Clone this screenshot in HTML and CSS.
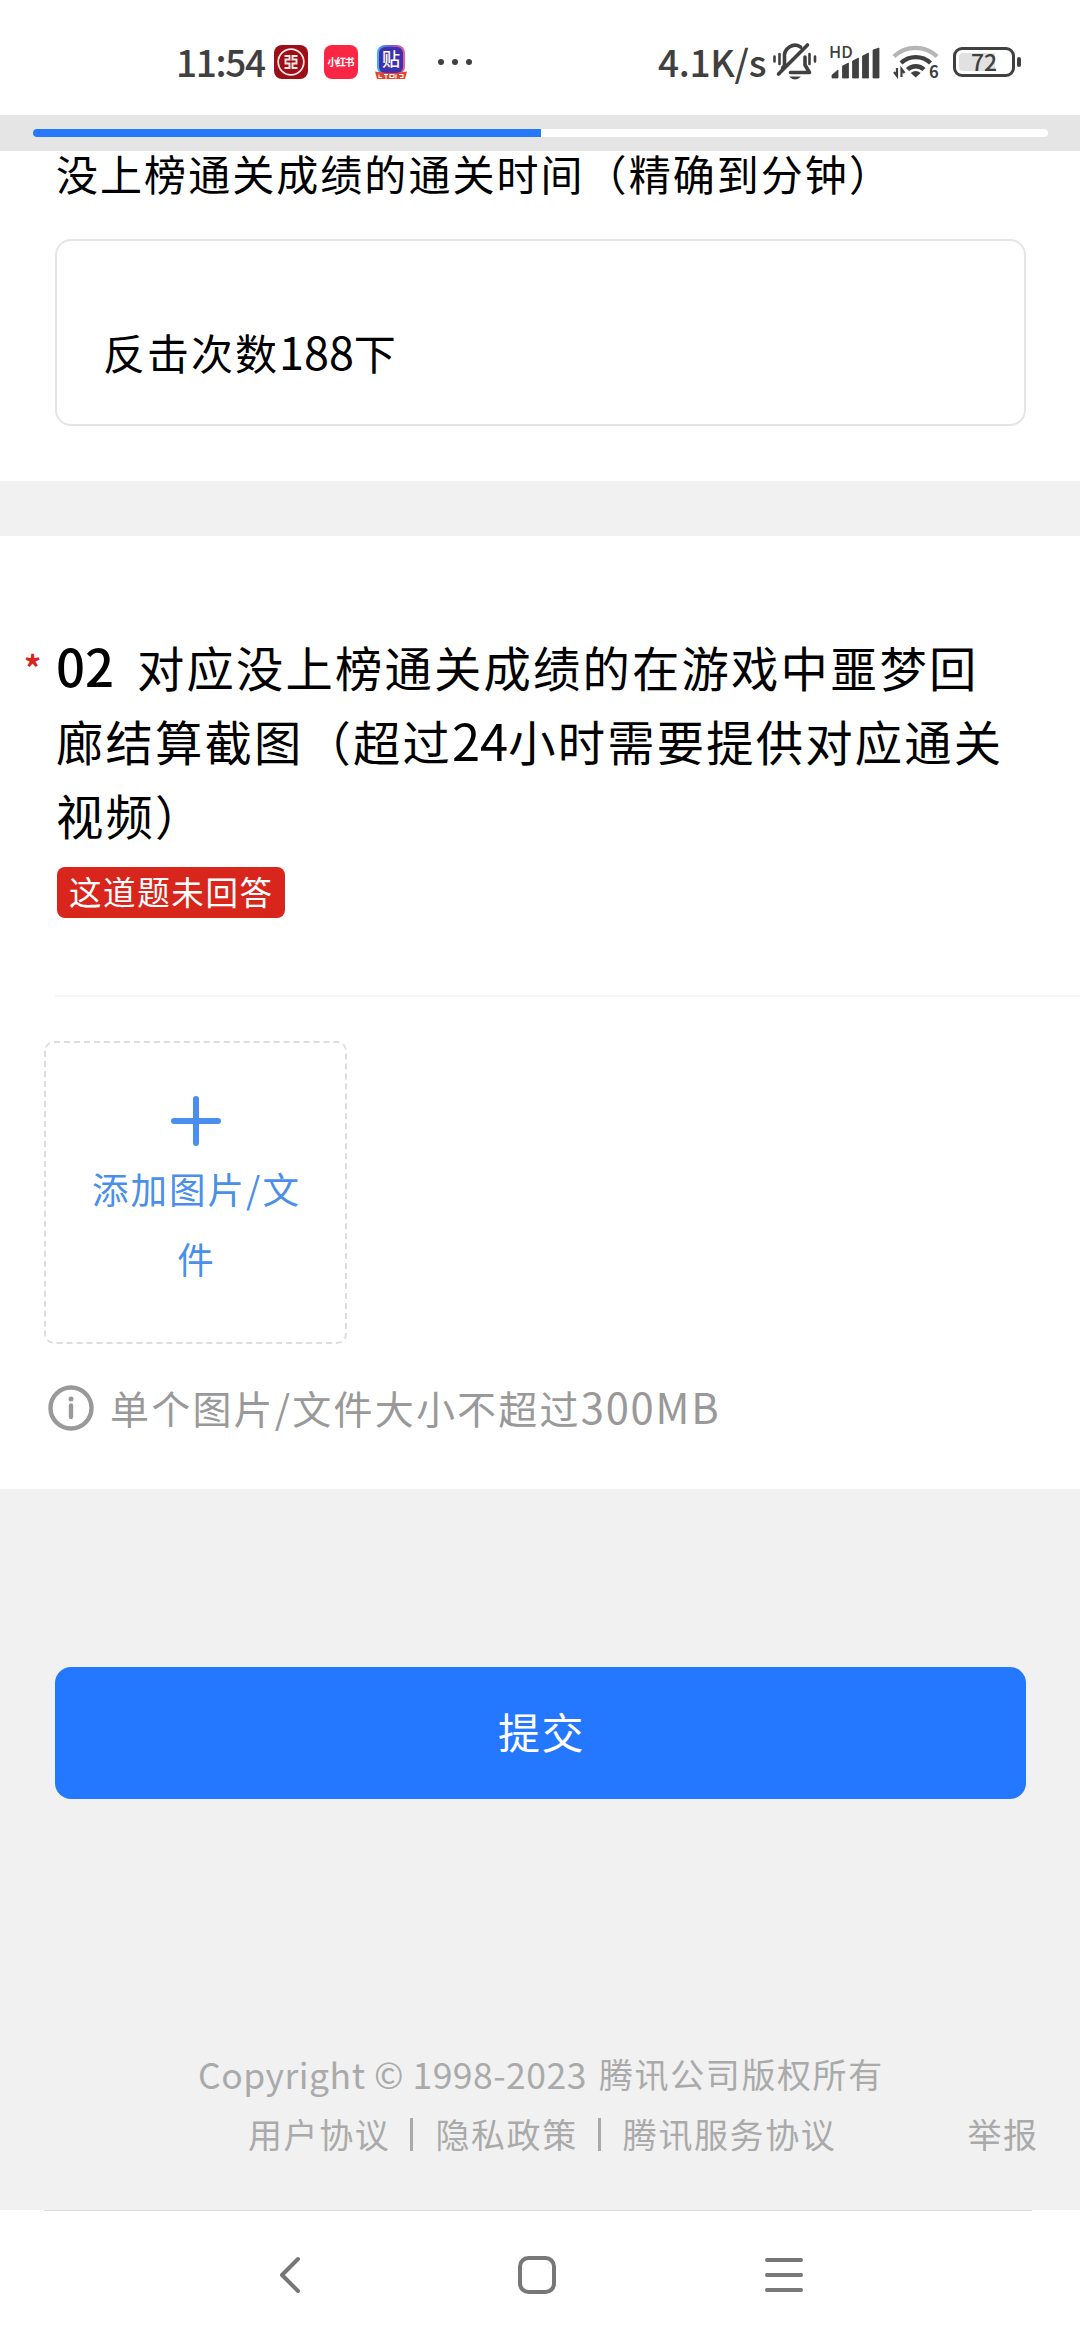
FILE: index.html
```html
<!DOCTYPE html>
<html lang="zh-CN">
<head>
<meta charset="utf-8">
<title>问卷</title>
<link rel="stylesheet" href="styles.css">
</head>
<body>
<header class="status">
  <span class="clock">11:54</span>
  <div class="apps">
    <svg width="34" height="34" viewBox="0 0 34 34"><rect width="34" height="34" rx="8" fill="#9d0e17"/><circle cx="17" cy="17" r="12.800" fill="none" stroke="#fbe9e9" stroke-width="1.700"/><path d="M10.500 11h5v3.500h-4v4h4v4.500h-5M23.500 11h-5v3.500h4v4h-4v4.500h5" fill="none" stroke="#fbe9e9" stroke-width="1.900"/></svg>
    <svg width="34" height="34" viewBox="0 0 34 34"><rect width="34" height="34" rx="8" fill="#fb2644"/><text class="logo-text" x="17" y="21" font-size="10" text-anchor="middle" textLength="27">小红书</text></svg>
    <svg width="34" height="34" viewBox="0 0 34 34"><defs><linearGradient id="g" x1="0" y1="0" x2="1" y2="0"><stop offset="0" stop-color="#3cb4f0"/><stop offset=".5" stop-color="#7a54d8"/><stop offset="1" stop-color="#f0608c"/></linearGradient></defs><rect x="3" width="28" height="30" rx="8" fill="url(#g)"/><rect x="5" y="2" width="24" height="26" rx="6" fill="#4030ad"/><text class="logo-text thin" x="17" y="20.500" font-size="18" text-anchor="middle">贴</text><path d="M1 26.500q16 3 32 0l-2 7.500h-28z" fill="#e2472b"/><path d="M5 29.500v3h3M10 29.500h4M12 29.500v4M16 29.500h4v3h-4zM22 29.500v4M25 29.500h4v3h-3" fill="none" stroke="#fff" stroke-width="1.100"/></svg>
  </div>
  <svg class="dots" width="36" height="8" viewBox="0 0 36 8"><circle cx="4" cy="4" r="3"/><circle cx="18" cy="4" r="3"/><circle cx="32" cy="4" r="3"/></svg>
  <span class="speed">4.1K/s</span>
  <svg class="bell" width="46" height="40" viewBox="0 0 46 40" fill="none" stroke="#404040" stroke-width="3.600" stroke-linecap="round" stroke-linejoin="round"><path d="M12.500 24v-8.500a10.500 11 0 0 1 16-10.500M33 15v8l4.500 7.500h-19M35.500 3L6.500 32M12 24l-1.500 2"/><path d="M7.500 12v10M37.500 12v10" stroke-width="2.600"/><path d="M2.500 14.500v5M43 14.500v5" stroke-width="2.600"/><path d="M17 34.500h12q-6 6-12 0z" fill="#404040" stroke="none"/></svg>
  <svg class="signal" width="52" height="48" viewBox="-2 -8 52 48"><text x="-1" y="13.500" font-size="16.500" font-weight="500" fill="#404040">HD</text><path d="M2 34v-3l6-5v8zM12.500 34v-12l6-3v15zM22.500 34v-17l6-3v20zM32.500 34v-22l6-3v25zM43 34V6l6-2v30z" fill="#404040" stroke="#404040" stroke-linejoin="round" stroke-width=".800"/></svg>
  <svg class="wifi" width="50" height="44" viewBox="0 -3 50 44" fill="none" stroke-width="4.400"><path d="M2 13.500a31 31 0 0 1 43 0" stroke="#b5b5b5"/><path d="M9 20a21.500 21.500 0 0 1 29.500 0M15.500 26.500a12 12 0 0 1 16.500 0" stroke="#404040"/><path d="M23.700 34.500l-5-4.500q5-4 10 0z" fill="#404040"/><path d="M2 29l3 4v-8M9.500 34v-8l3 4" stroke="#404040" stroke-width="2.200"/><text x="37" y="35" font-size="16.500" font-weight="700" fill="#404040">6</text></svg>
  <div class="battery"><span class="level">72</span></div>
</header>
<div class="progress"><div class="track"><div class="fill"></div></div></div>
<main>
  <section class="card first">
    <h2 class="subtitle">没上榜通关成绩的通关时间（精确到分钟）</h2>
    <div class="answer">反击次数<span class="num">188</span>下</div>
  </section>
  <section class="card second">
    <div class="question">
      <span class="star">*</span>
      <h2 class="title"><b>02</b>对应没上榜通关成绩的在游戏中噩梦回<br>廊结算截图（超过<span class="num">24</span>小时需要提供对应通关<br>视频）</h2>
    </div>
    <div class="error">这道题未回答</div>
    <hr class="rule">
    <div class="upload">
      <svg width="50" height="50" viewBox="0 0 50 50"><path d="M25 3v44M3 25h44" stroke="#4b8fee" stroke-width="6" stroke-linecap="round"/></svg>
      <p>添加图片/文<br>件</p>
    </div>
    <div class="hint">
      <svg width="46" height="46" viewBox="0 0 46 46"><circle cx="23" cy="23" r="20.500" fill="none" stroke="#999" stroke-width="4.400"/><circle cx="23" cy="14" r="2.500" fill="#999"/><path d="M23 20.500v11.500" stroke="#999" stroke-width="4.400" stroke-linecap="round"/></svg>
      <p>单个图片/文件大小不超过<span class="num size">300MB</span></p>
    </div>
  </section>
  <button class="submit">提交</button>
  <footer class="footer">
    <p class="copy"><span class="latin">Copyright © 1998-2023</span><span>腾讯公司版权所有</span></p>
    <div class="links"><span>用户协议</span><i></i><span>隐私政策</span><i></i><span>腾讯服务协议</span><span class="report">举报</span></div>
  </footer>
</main>
<nav class="nav">
  <svg width="38" height="40" viewBox="0 0 38 40"><path d="M27 4L11 20l16 16"/></svg>
  <svg width="38" height="40" viewBox="0 0 38 40"><rect x="2" y="3" width="34" height="34" rx="8.500"/></svg>
  <svg width="38" height="40" viewBox="0 0 38 40"><path d="M2 5h34M2 20h34M2 35h34"/></svg>
</nav>
</body>
</html>
```
FILE: styles.css
```css
* { box-sizing: border-box; margin: 0; padding: 0; }
body {
  width: 1080px;
  height: 2340px;
  overflow: hidden;
  display: flex;
  flex-direction: column;
  background: #f1f1f1;
  color: #000;
  font-family: "Noto Sans CJK SC", sans-serif;
  font-weight: 400;
  white-space: nowrap;
}
svg { display: block; flex: none; overflow: visible; }

.status {
  height: 115px;
  flex: none;
  padding: 9px 0 0 176px;
  display: flex;
  align-items: center;
  background: #fff;
  color: #404040;
  font-weight: 500;
}
.clock, .speed { font-size: 37px; line-height: 50px; margin-top: -3px; }
.clock { width: 98px; letter-spacing: -1.3px; }
.apps { display: flex; gap: 16px; }
.logo-text { fill: #fff; font-weight: 700; }
.thin { font-weight: 500; }
.dots { margin-left: 29px; fill: #404040; }
.speed { margin-left: 185px; width: 114px; letter-spacing: -0.3px; }
.signal { margin-left: 10px; margin-top: -4px; }
.wifi { margin-left: 12px; }
.battery {
  position: relative;
  margin-left: 11px;
  width: 62px;
  height: 30px;
  padding: 3px;
  border: 3px solid #404040;
  border-radius: 9px;
}
.battery::after {
  content: "";
  position: absolute;
  left: 61px;
  top: 7px;
  width: 4px;
  height: 10px;
  border-radius: 2px;
  background: #404040;
}
.level {
  display: block;
  height: 18px;
  border-radius: 4px;
  background: linear-gradient(90deg, #e1e1e1 72%, #fff 72%);
  font-size: 23px;
  line-height: 16px;
  text-align: center;
}

.progress { height: 36px; flex: none; padding: 14px 32px 0 33px; background: #e5e5e5; }
.track { height: 8px; border-radius: 4px; background: #fff; overflow: hidden; }
.fill { width: 50%; height: 100%; background: #2678fd; }

main { flex: none; height: 2059px; display: flex; flex-direction: column; }
.card { flex: none; background: #fff; }
.first { height: 330px; padding: 0 54px 0 55px; }
.subtitle {
  height: 88px;
  padding-left: 1px;
  font-size: 42px;
  line-height: 44px;
  letter-spacing: 2.05px;
  font-weight: 400;
}
.num { font-size: 1.07em; line-height: 1; letter-spacing: 0; }
.answer {
  height: 187px;
  padding: 74px 0 0 46px;
  border: 2px solid #e5e5e5;
  border-radius: 16px;
  font-size: 42px;
  line-height: 73px;
  letter-spacing: 2px;
}
.second { height: 953px; margin-top: 55px; padding-top: 94px; }
.question { display: flex; padding-left: 24px; }
.star { width: 32px; font: 700 34px/74px "Noto Sans CJK SC", sans-serif; color: #d9261c; }
.title { font-size: 47.3px; line-height: 74px; letter-spacing: 2.2px; font-weight: 400; }
.title b { display: inline-block; width: 81px; font-size: 51px; line-height: 1; letter-spacing: 0; font-weight: 500; }
.error {
  width: 228px;
  height: 51px;
  margin: 15px 0 0 57px;
  padding-left: 12px;
  border-radius: 8px;
  background: #d9261c;
  color: #fff;
  font-size: 32.5px;
  line-height: 48px;
  letter-spacing: 1.6px;
}
.rule { height: 2px; margin: 77px 0 0 55px; border: 0; background: #f5f5f5; }
.upload {
  width: 303px;
  height: 303px;
  margin: 44px 0 0 44px;
  padding-top: 53px;
  display: flex;
  flex-direction: column;
  align-items: center;
  border: 2px dashed #ddd;
  border-radius: 10px;
  color: #4b8fe8;
  font-size: 36.5px;
  line-height: 70px;
  letter-spacing: 2px;
  text-align: center;
}
.upload p { margin-top: 8px; padding-left: 2px; }
.hint {
  display: flex;
  align-items: center;
  gap: 16px;
  margin: 41px 0 0 48px;
  height: 46px;
  color: #999;
  font-size: 39px;
  line-height: 46px;
  letter-spacing: 2.2px;
}
.hint p { margin-top: -3px; }
.size { letter-spacing: 1.8px; }
.submit {
  flex: none;
  width: 971px;
  height: 132px;
  margin: 178px 0 0 55px;
  padding: 0 0 5px 2px;
  border: 0;
  border-radius: 16px;
  background: #2478ff;
  color: #fff;
  font: 400 42px/60px "Noto Sans CJK SC", sans-serif;
  letter-spacing: 1.6px;
}
.footer { margin-top: 245px; color: #aaa; font-size: 34px; line-height: 60px; letter-spacing: 1.6px; }
.copy { display: flex; gap: 11px; padding-left: 198px; }
.latin { width: 390px; font-size: 35.500px; letter-spacing: 0.5px; }
.links { display: flex; align-items: center; padding-left: 248px; }
.links i { width: 3px; height: 33px; margin: 0 22px 0 20px; background: #aaa; }
.report { margin-left: 131px; }

.nav {
  height: 130px;
  flex: none;
  padding: 0 277px 0 271px;
  display: flex;
  align-items: center;
  justify-content: space-between;
  background: linear-gradient(#ddd, #ddd) 44px 0 / 988px 1px no-repeat #fff;
}
.nav svg { fill: none; stroke: #777; stroke-width: 4; stroke-linecap: round; stroke-linejoin: round; }
```
